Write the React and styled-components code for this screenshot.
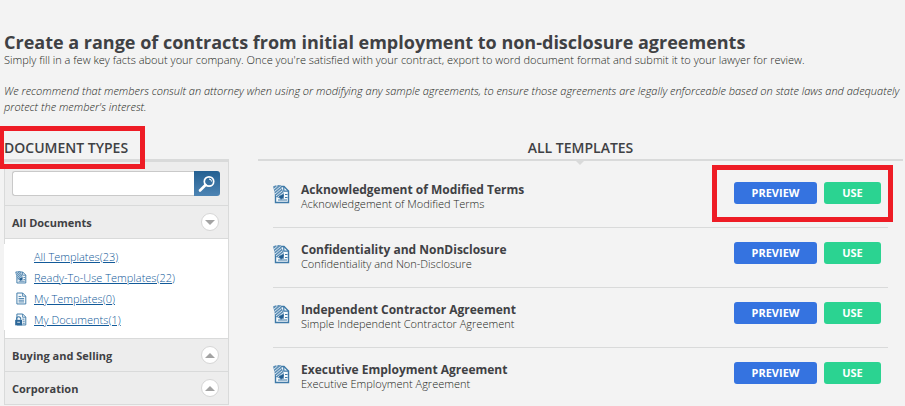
import React from 'react'
import styled, { createGlobalStyle } from 'styled-components'

const GlobalStyle = createGlobalStyle`
  * {
    box-sizing: border-box;
  }

  body {
    margin: 0;
    background: #f3f3f3;
    color: #3f4144;
    font-family: "Open Sans", "Noto Sans", sans-serif;
    font-size: 11px;
  }

  h1, h2, h3, p, ul {
    margin: 0;
    padding: 0;
  }

  ul {
    list-style: none;
  }
`

const templates = [
  { title: 'Acknowledgement of Modified Terms', text: 'Acknowledgement of Modified Terms', marked: true },
  { title: 'Confidentiality and NonDisclosure', text: 'Confidentiality and Non-Disclosure' },
  { title: 'Independent Contractor Agreement', text: 'Simple Independent Contractor Agreement' },
  { title: 'Executive Employment Agreement', text: 'Executive Employment Agreement' },
]

const links = [
  { label: 'All Templates(23)' },
  { label: 'Ready-To-Use Templates(22)', icon: 'ready' },
  { label: 'My Templates(0)', icon: 'page' },
  { label: 'My Documents(1)', icon: 'locked' },
]

const DocIcon = ({ kind, width, height }) => (
  <svg width={width} height={height} viewBox="0 0 17 19" fill="none" stroke="#3f7aa8" aria-hidden="true">
    {/* sheet with a folded corner */}
    <path d="M2.5 1.5h8.5l4.5 4.5v11.5h-13z" fill="#f6f9fb" strokeWidth="1.4" />
    <path d="M10.8 1.5v4.7h4.7" strokeWidth="1.2" />
    {kind === 'ready' && (
      <>
        <path d="M0 1.500l2.500-1 1 1 1.500-1.500 3 0.500 3 9-4 4-4-1.500z" fill="#5b8db5" stroke="none" />
        <path
          d="M0.500 4.500l4-3.500M1.500 6.500l6-5M2 9l6.500-5.500M3 11l6-5M4.500 12.500l5.500-4.500"
          stroke="#e6eef4"
          strokeWidth="0.900"
        />
        <path d="M6 11l5-1.500-0.500 4.500-1.500-0.500-1 1.500z" fill="#245f91" stroke="none" />
        <path d="M12 9.500h2.500M12 12.500h2.500M5 15h9" strokeWidth="1.200" />
      </>
    )}
    {kind === 'page' && <path d="M5 6.500h4M5 9.500h8M5 12h8M5 14.500h8" strokeWidth="1.300" />}
    {kind === 'locked' && (
      <>
        <path d="M10.500 9h3M11 12h3M11 15h3" strokeWidth="1.300" />
        <path d="M2 10V8.500a3 3 0 0 1 6 0V10" strokeWidth="1.600" />
        <rect x="0" y="10" width="10" height="8" fill="#2d6899" stroke="none" />
        <path d="M3 13.500h4" stroke="#fff" strokeWidth="1.200" />
      </>
    )}
  </svg>
)

const SearchIcon = () => (
  <svg width="18" height="18" viewBox="0 0 18 18" fill="none" stroke="#fff" aria-hidden="true">
    <circle cx="11" cy="6.500" r="4.700" strokeWidth="1.700" />
    <path d="M11 4a2.500 2.500 0 0 1 2.500 2.500" strokeWidth="1" />
    <path d="M7.500 10L2 15.500" strokeWidth="2.600" strokeLinecap="round" />
  </svg>
)

const Group = ({ title, open }) => (
  <GroupButton type="button" aria-expanded={!!open}>
    {title}
    <Round>
      <svg width="10" height="5" viewBox="0 0 10 5" aria-hidden="true">
        <path d={open ? 'M0 0h10l-5 5z' : 'M0 5h10l-5-5z'} fill="#a3a3a3" />
      </svg>
    </Round>
  </GroupButton>
)

const App = () => {
  const [search, setSearch] = React.useState('')

  return (
    <Page>
      <GlobalStyle />
      <Intro>
        <h1>Create a range of contracts from initial employment to non-disclosure agreements</h1>
        <p>
          Simply fill in a few key facts about your company. Once you're satisfied with your contract, export to word
          document format and submit it to your lawyer for review.
        </p>
        <Note>
          We recommend that members consult an attorney when using or modifying any sample agreements, to ensure those
          agreements are legally enforceable based on state laws and adequately protect the member's interest.
        </Note>
      </Intro>

      <Columns>
        <Sidebar>
          <SectionTitle>DOCUMENT TYPES</SectionTitle>
          <TypesMark />
          <Panel>
            <SearchForm onSubmit={(e) => e.preventDefault()}>
              <SearchInput
                type="text"
                aria-label="Search documents"
                value={search}
                onChange={(e) => setSearch(e.target.value)}
              />
              <SearchButton type="submit" aria-label="Search">
                <SearchIcon />
              </SearchButton>
            </SearchForm>
            <Group title="All Documents" open />
            <Folder>
              <ul>
                {links.map((link) => (
                  <li key={link.label}>
                    <IconCell>{link.icon && <DocIcon kind={link.icon} width={12} height={13} />}</IconCell>
                    <a href="#">{link.label}</a>
                  </li>
                ))}
              </ul>
            </Folder>
            <Group title="Buying and Selling" />
            <Group title="Corporation" />
          </Panel>
        </Sidebar>

        <Main>
          <MainTitle>ALL TEMPLATES</MainTitle>
          <TemplateList>
            {templates.map((item) => (
              <TemplateRow key={item.title}>
                <DocIcon kind="ready" width={17} height={19} />
                <TemplateText>
                  <h3>{item.title}</h3>
                  <p>{item.text}</p>
                </TemplateText>
                <Actions>
                  <Action type="button">PREVIEW</Action>
                  <Action type="button" $use>USE</Action>
                  {item.marked && <ActionsMark />}
                </Actions>
              </TemplateRow>
            ))}
          </TemplateList>
        </Main>
      </Columns>
    </Page>
  )
}

export default App

const Page = styled.div`
  padding: 30px 2px 0 4px;
  overflow: hidden;
`

const Intro = styled.header`
  h1 {
    font-size: 18px;
    font-weight: 700;
    line-height: 24px;
  }

  p {
    color: #1c1e21;
    font-size: 11px;
    font-weight: 300;
    line-height: 12px;
  }
`

const Note = styled.p`
  && {
    margin-top: 17px;
    line-height: 16px;
    font-style: italic;
  }
`

const Columns = styled.div`
  display: flex;
  gap: 29px;
  margin-top: 22px;
`

const Sidebar = styled.aside`
  position: relative;
  flex: 0 0 225px;
`

const SectionTitle = styled.h2`
  height: 22px;
  font-size: 14px;
  font-weight: 600;
  line-height: 22px;
`

const Panel = styled.div`
  border: 1px solid #d9dada;
  border-top-width: 3px;
  background: #ededed;
`

const SearchForm = styled.form`
  display: flex;
  padding: 9px 8px 9px 7px;
`

const SearchInput = styled.input`
  flex: 1;
  min-width: 0;
  height: 25px;
  padding: 0 6px;
  border: 1px solid #c9c9c9;
  border-right: none;
  border-radius: 3px 0 0 3px;
  background: white;
  font: inherit;
`

const SearchButton = styled.button`
  display: flex;
  align-items: center;
  justify-content: center;
  width: 26px;
  height: 25px;
  padding: 0;
  border: none;
  border-radius: 0 3px 3px 0;
  background: linear-gradient(#235f91, #4d84b3);
  cursor: pointer;
`

const GroupButton = styled.button`
  display: flex;
  align-items: center;
  justify-content: space-between;
  width: 100%;
  height: 33px;
  padding: 0 9px 0 7px;
  border: none;
  border-top: 1px solid #d9dada;
  background: #ededed;
  color: inherit;
  font: 700 11px "Open Sans", "Noto Sans", sans-serif;
  cursor: pointer;
`

const Round = styled.span`
  display: flex;
  align-items: center;
  justify-content: center;
  width: 18px;
  height: 18px;
  border: 1px solid #d6d6d6;
  border-radius: 50%;
  background: white;
`

const Folder = styled.div`
  padding: 5px 0 8px;
  border-top: 1px solid #d9dada;
  background: white;

  ul {
    margin-left: -1px;
    padding: 2px 0 0 11px;
    background: white;
  }

  li {
    display: flex;
    align-items: center;
    height: 21px;
  }

  a {
    color: #125a99;
    font-size: 11px;
    font-weight: 300;
    line-height: 20px;
  }
`

const IconCell = styled.span`
  display: flex;
  width: 19px;
`

const Main = styled.main`
  flex: 1;
  min-width: 0;
`

const MainTitle = styled(SectionTitle)`
  position: relative;
  height: 24px;
  border-bottom: 2px solid #d9dada;
  text-align: center;

  &::after {
    content: '';
    position: absolute;
    top: 100%;
    left: 50%;
    margin-left: -7px;
    border: 6px solid transparent;
    border-top-color: #d9dada;
    border-bottom: none;
  }
`

const TemplateList = styled.ul`
  padding: 7px 15px 0;
`

const TemplateRow = styled.li`
  display: flex;
  align-items: flex-start;
  height: 60px;
  padding: 14px 7px 0 0;
  border-bottom: 1px solid #d9dada;

  > svg {
    margin-top: 3px;
  }

  &:last-child {
    height: 58px;
    border-bottom: none;
  }
`

const TemplateText = styled.div`
  flex: 1;
  padding-left: 11px;

  h3 {
    font-size: 12px;
    font-weight: 700;
    line-height: 16px;
  }

  p {
    color: #1c1e21;
    font-size: 11px;
    font-weight: 300;
    line-height: 12px;
  }
`

const Actions = styled.div`
  position: relative;
  display: flex;
  gap: 7px;
`

const Action = styled.button`
  width: ${(props) => (props.$use ? '57px' : '83px')};
  height: 22px;
  padding: 0;
  border: none;
  border-radius: 3px;
  background: ${(props) => (props.$use ? '#2bd391' : '#3573e0')};
  color: white;
  font: 700 11px/22px "Open Sans", "Noto Sans", sans-serif;
  cursor: pointer;
`

// red frames that point out parts of the page
const RedFrame = styled.span`
  position: absolute;
  border: 5px solid #ee1c25;
  pointer-events: none;
`

const TypesMark = styled(RedFrame)`
  top: -11px;
  left: -5px;
  width: 146px;
  height: 43px;
`

const ActionsMark = styled(RedFrame)`
  inset: -17px -12px -18px -22px;
`
